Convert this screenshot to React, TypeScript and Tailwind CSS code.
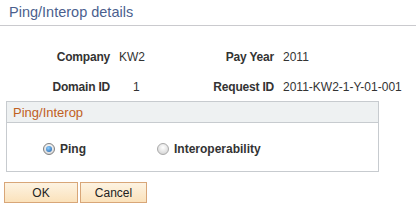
// Ping/Interop details page
type Field = { label: string; value: string; pad?: boolean }

const left: Field[] = [
  { label: 'Company', value: 'KW2' },
  { label: 'Domain ID', value: '1', pad: true },
]
const right: Field[] = [
  { label: 'Pay Year', value: '2011' },
  { label: 'Request ID', value: '2011-KW2-1-Y-01-001' },
]

function Radio({ checked }: { checked: boolean }) {
  return (
    <span
      className={
        checked
          ? 'inline-flex h-[12px] w-[12px] items-center justify-center rounded-full border border-[#7f7f7f] bg-[radial-gradient(circle_at_50%_35%,#ffffff,#cfcfcf)]'
          : 'inline-flex h-[12px] w-[12px] items-center justify-center rounded-full border border-[#a9a9a9] bg-[radial-gradient(circle_at_50%_35%,#ffffff,#cdcdcd)]'
      }
    >
      {checked && (
        <span className="h-[6px] w-[6px] rounded-full bg-[radial-gradient(circle_at_40%_35%,#8fd0ff,#1a5aa6)]" />
      )}
    </span>
  )
}

function Button({ label, width }: { label: string; width: string }) {
  return (
    <button
      className={`${width} h-[21px] border border-[#d8a678] bg-gradient-to-b from-[#fdf3e2] to-[#fbe2bb] text-[12px] leading-none text-[#222]`}
    >
      {label}
    </button>
  )
}

export default function App() {
  return (
    <div className="w-[416px] h-[212px] overflow-hidden bg-white font-['Liberation_Sans',Arial,sans-serif] text-[#333]">
      {/* titulo */}
      <div className="h-[26px] border-b border-[#cacace] pl-[9px] pt-[3px] text-[14.5px] leading-[18px] text-[#4b5f8e]">
        Ping/Interop details
      </div>

      <div className="mt-[24px] grid grid-cols-[110px_80px_66px_1fr] gap-x-[9px] gap-y-[15px] whitespace-nowrap text-[12px] leading-[15px]">
        {left.map((f, i) => (
          <div key={f.label} className="contents">
            <div className="text-right font-bold tracking-[-0.2px]">{f.label}</div>
            <div className={f.pad ? 'pl-[14px]' : ''}>{f.value}</div>
            <div className="text-right font-bold tracking-[-0.2px]">{right[i].label}</div>
            <div>{right[i].value}</div>
          </div>
        ))}
      </div>

      {/* group box */}
      <div className="ml-[6px] mt-[6px] w-[373px] border border-[#c7cbcf]">
        <div className="h-[21px] border-b border-[#c7cbcf] bg-[#eef1f2] pl-[6px] pt-[3px] text-[13px] leading-[15px] text-[#c0601f]">
          Ping/Interop
        </div>
        <div className="flex h-[48px] items-center pl-[36px] pt-[4px] text-[12px] font-bold">
          <label className="flex w-[114px] items-center gap-[5px]">
            <Radio checked />
            Ping
          </label>
          <label className="flex items-center gap-[5px]">
            <Radio checked={false} />
            Interoperability
          </label>
        </div>
      </div>

      <div className="ml-[4px] mt-[10px] flex gap-[2px]">
        <Button label="OK" width="w-[74px]" />
        <Button label="Cancel" width="w-[67px]" />
      </div>
    </div>
  )
}
